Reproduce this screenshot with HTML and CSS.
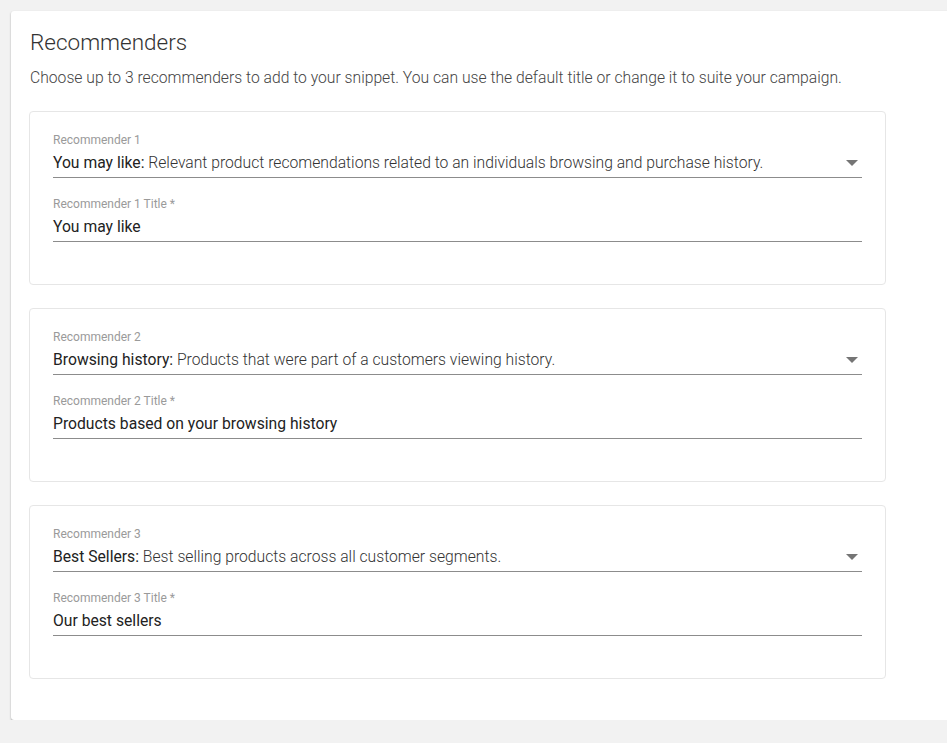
FILE: index.html
```html
<!DOCTYPE html>
<html lang="en">
<head>
    <meta charset="UTF-8">
    <meta name="viewport" content="width=device-width, initial-scale=1.0">
    <title>Recommenders</title>
    <link rel="stylesheet" href="styles.css">
</head>
<body>
    <div class="panel">
        <h2 class="panel-title">Recommenders</h2>
        <p class="panel-intro">Choose up to 3 recommenders to add to your snippet. You can use the default title or change it to suite your campaign.</p>

        <div class="rec-list">
            <div class="rec-card">
                <div class="field">
                    <label>Recommender 1</label>
                    <div class="select-value">
                        <span class="select-text"><span class="rec-name">You may like:</span> Relevant product recomendations related to an individuals browsing and purchase history.</span>
                        <span class="caret"></span>
                    </div>
                </div>
                <div class="field">
                    <label>Recommender 1 Title *</label>
                    <div class="input-value">You may like</div>
                </div>
            </div>

            <div class="rec-card">
                <div class="field">
                    <label>Recommender 2</label>
                    <div class="select-value">
                        <span class="select-text"><span class="rec-name">Browsing history:</span> Products that were part of a customers viewing history.</span>
                        <span class="caret"></span>
                    </div>
                </div>
                <div class="field">
                    <label>Recommender 2 Title *</label>
                    <div class="input-value">Products based on your browsing history</div>
                </div>
            </div>

            <div class="rec-card">
                <div class="field">
                    <label>Recommender 3</label>
                    <div class="select-value">
                        <span class="select-text"><span class="rec-name">Best Sellers:</span> Best selling products across all customer segments.</span>
                        <span class="caret"></span>
                    </div>
                </div>
                <div class="field">
                    <label>Recommender 3 Title *</label>
                    <div class="input-value">Our best sellers</div>
                </div>
            </div>
        </div>
    </div>
</body>
</html>
```

FILE: styles.css
```css
body {
    font-family: Roboto, "Liberation Sans", Arial, sans-serif;
    margin: 0;
    padding: 0;
    background-color: #f2f2f2;
    overflow: hidden;
}
.panel {
    background-color: white;
    margin: 11px 0 0 11px;
    width: 960px;
    padding: 17px 0 41px 18px;
    border-radius: 3px 0 0 3px;
    box-shadow: 0 1px 2px rgba(0, 0, 0, 0.35);
}
.panel-title {
    font-size: 22.5px;
    font-weight: 300;
    line-height: 28px;
    color: #333;
    margin: 0 0 11px 1px;
}
.panel-intro {
    font-size: 15.7px;
    font-weight: 300;
    line-height: 22px;
    color: #444;
    margin: 0 0 22px 1px;
}
.rec-list {
    display: flex;
    flex-direction: column;
    gap: 23px;
    width: 857px;
}
.rec-card {
    border: 1px solid #e6e6e6;
    border-radius: 4px;
    padding: 20px 23px 42px 23px;
}
.field {
    margin-bottom: 18px;
}
.field:last-child {
    margin-bottom: 0;
}
.field label {
    display: block;
    font-size: 12px;
    line-height: 16px;
    color: #9a9a9a;
    margin-bottom: 4px;
}
.select-value,
.input-value {
    font-size: 15.7px;
    line-height: 22px;
    padding-bottom: 3px;
    border-bottom: 1px solid #8c8c8c;
    color: #222;
}
.select-value {
    display: flex;
    align-items: center;
    justify-content: space-between;
}
.select-text {
    font-weight: 300;
    color: #333;
}
.rec-name {
    font-weight: 400;
    color: #222;
}
.caret {
    width: 0;
    height: 0;
    border-left: 6px solid transparent;
    border-right: 6px solid transparent;
    border-top: 6px solid #757575;
    margin-right: 4px;
}
```
